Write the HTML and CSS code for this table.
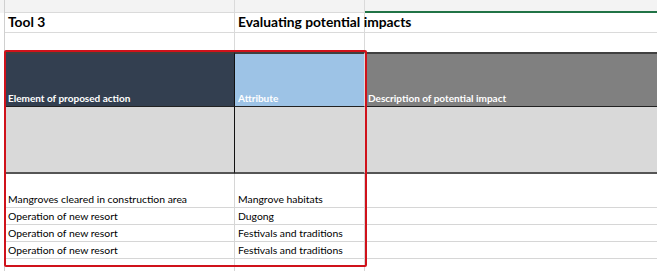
FILE: index.html
```html
<!DOCTYPE html>
<html>
<head>
<meta charset="utf-8">
<link rel="stylesheet" href="styles.css">
</head>
<body>
<div class="sheet">
  <div class="row band">
    <div class="c g"></div><div class="c a"></div><div class="c b"></div><div class="c cc sel"></div>
  </div>
  <div class="row title">
    <div class="c g"></div><div class="c a">Tool 3</div><div class="c b over">Evaluating potential impacts</div><div class="c cc"></div>
  </div>
  <div class="row blank">
    <div class="c g"></div><div class="c a"></div><div class="c b"></div><div class="c cc"></div>
  </div>
  <div class="row head">
    <div class="c g"></div><div class="c a navy">Element of proposed action</div><div class="c b blue">Attribute</div><div class="c cc grey">Description of potential impact</div>
  </div>
  <div class="row shade">
    <div class="c g"></div><div class="c a"></div><div class="c b"></div><div class="c cc"></div>
  </div>
  <div class="row data tall">
    <div class="c g"></div><div class="c a">Mangroves cleared in construction area</div><div class="c b">Mangrove habitats</div><div class="c cc"></div>
  </div>
  <div class="row data">
    <div class="c g"></div><div class="c a">Operation of new resort</div><div class="c b">Dugong</div><div class="c cc"></div>
  </div>
  <div class="row data">
    <div class="c g"></div><div class="c a">Operation of new resort</div><div class="c b">Festivals and traditions</div><div class="c cc"></div>
  </div>
  <div class="row data">
    <div class="c g"></div><div class="c a">Operation of new resort</div><div class="c b">Festivals and traditions</div><div class="c cc"></div>
  </div>
  <div class="row data last">
    <div class="c g"></div><div class="c a"></div><div class="c b"></div><div class="c cc"></div>
  </div>
  <div class="focus"></div>
</div>
</body>
</html>
```
FILE: styles.css
```css
html, body {
  margin: 0;
  padding: 0;
  background: #ffffff;
}
.sheet {
  position: relative;
  width: 657px;
  font-family: Lato, "Open Sans", sans-serif;
  color: #000;
}
.row {
  display: grid;
  grid-template-columns: 5px 230px 130px 292px;
}
.c {
  box-sizing: border-box;
  border-bottom: 1px solid #dadada;
  border-right: 1px solid #dadada;
  padding-left: 3px;
  white-space: nowrap;
  display: flex;
  align-items: flex-end;
}
.c.g { padding: 0; border-right: 1px solid #d0d0d0; border-bottom: none; }
.c.cc { border-right: none; }
.band .c { height: 13px; background: #f3f3f3; }
.band .c.sel { border-bottom: 2px solid #217346; }
.title .c { height: 20px; font-weight: 700; font-size: 13.8px; padding-bottom: 2px; }
.c.over { overflow: visible; }
.blank .c { height: 19px; border-bottom: none; }
.head .c {
  height: 55px;
  color: #fff;
  font-weight: 700;
  font-size: 10px;
  padding-bottom: 2px;
  border-top: 2px solid #404040;
  border-bottom: 1px solid #222;
}
.head .c.g { background: #fff; border-top: none; border-bottom: none; }
.navy { background: #333f50; border-right: 1px solid #111 !important; }
.blue { background: #9dc3e6; }
.grey { background: #808080; }
.shade .c { height: 67px; background: #d9d9d9; border-bottom: 2px solid #555; }
.shade .c.a { border-right: 1px solid #111; }
.shade .c.g { background: #fff; border-bottom: none; }
.data .c { height: 17px; font-size: 10.4px; padding-bottom: 2px; border-bottom: 1px solid #d6d6d6; border-right: 1px solid #d6d6d6; }
.data .c.cc { border-right: none; }
.data .c.g { border-bottom: none; border-right: 1px solid #d0d0d0; }
.data.tall .c { height: 34px; }
.data.last .c { height: 13px; border-bottom: none; }
.focus {
  position: absolute;
  left: 4px;
  top: 50px;
  width: 363px;
  height: 217px;
  box-sizing: border-box;
  border: 2px solid #d0121b;
  border-radius: 2px;
  pointer-events: none;
}
```
